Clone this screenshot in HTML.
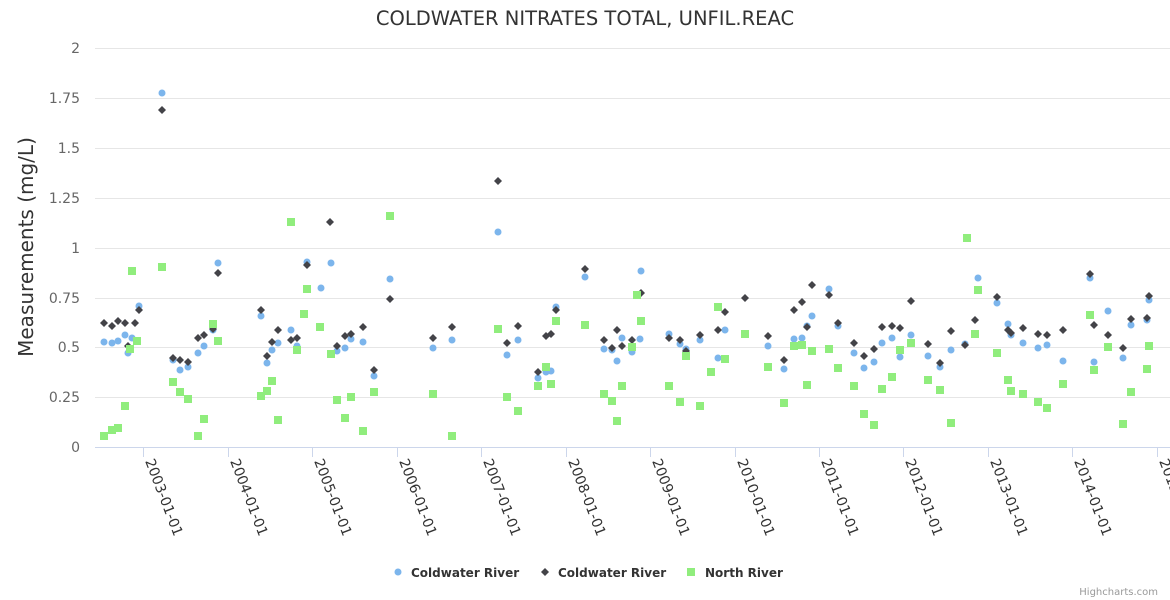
<!DOCTYPE html>
<html><head><meta charset="utf-8"><style>
html,body{margin:0;padding:0;background:#fff;}
svg{display:block;font-family:"DejaVu Sans","Liberation Sans",sans-serif;}
</style></head><body>
<svg width="1170" height="600" viewBox="0 0 1170 600">
<text x="585" y="25" text-anchor="middle" font-size="19.5" fill="#333">COLDWATER NITRATES TOTAL, UNFIL.REAC</text>
<g stroke="#e6e6e6" stroke-width="1">
<line x1="95" x2="1170" y1="48.5" y2="48.5"/><line x1="95" x2="1170" y1="98.5" y2="98.5"/>
<line x1="95" x2="1170" y1="148.5" y2="148.5"/><line x1="95" x2="1170" y1="198.5" y2="198.5"/>
<line x1="95" x2="1170" y1="248.5" y2="248.5"/><line x1="95" x2="1170" y1="298.5" y2="298.5"/>
<line x1="95" x2="1170" y1="347.5" y2="347.5"/><line x1="95" x2="1170" y1="397.5" y2="397.5"/>
</g>
<line x1="95" x2="1170" y1="447.5" y2="447.5" stroke="#ccd6eb"/>
<g stroke="#ccd6eb"><path d="M143.5 447v10M228.5 447v10M312.5 447v10M397.5 447v10M481.5 447v10M566.5 447v10M650.5 447v10M735.5 447v10M819.5 447v10M903.5 447v10M988.5 447v10M1072.5 447v10M1157.5 447v10"/></g>
<g font-size="14" fill="#666" text-anchor="end">
<text x="80" y="53">2</text><text x="80" y="103">1.75</text><text x="80" y="153">1.5</text><text x="80" y="203">1.25</text><text x="80" y="253">1</text><text x="80" y="303">0.75</text><text x="80" y="352">0.5</text><text x="80" y="402">0.25</text><text x="80" y="452">0</text>
</g>
<text transform="translate(33,247) rotate(-90)" text-anchor="middle" font-size="20" fill="#333">Measurements (mg/L)</text>
<g font-size="14" fill="#333" id="xl"></g>
<g id="pts"></g>
<g font-size="12" font-weight="bold" fill="#333">
<circle cx="398" cy="572" r="3.5" fill="#7cb5ec"/><text x="411" y="577">Coldwater River</text>
<path d="M545 568l4 4-4 4-4-4z" fill="#434348"/><text x="558" y="577">Coldwater River</text>
<rect x="687" y="568" width="8" height="8" fill="#90ed7d"/><text x="705" y="577">North River</text>
</g>
<text x="1158" y="595" text-anchor="end" font-size="10" fill="#999">Highcharts.com</text>
</svg>
<script>
var ns="http://www.w3.org/2000/svg";
var xl=document.getElementById("xl"),P=document.getElementById("pts");
var tx=[143,228,312,397,481,566,650,735,819,903,988,1072,1157];
tx.forEach(function(x,i){var t=document.createElementNS(ns,"text");var X=x+2,Y=461;t.setAttribute("x",X);t.setAttribute("y",Y);t.setAttribute("transform","rotate(69 "+X+" "+Y+")");t.textContent=(2003+i)+"-01-01";xl.appendChild(t);});
function parse(s){return s.trim().split(";").map(function(p){return p.split(",").map(Number);});}
var blue="104,342;112,343;118,341;125,335;128,353;132,338;139,306;162,93;173,360;180,370;188,367;198,353;204,346;213,330;218,263;261,316;267,363;272,350;278,343;291,330;297,346;307,262;321,288;331,263;337,351;345,348;351,339;363,342;374,376;390,279;433,348;452,340;498,232;507,355;518,340;538,378;546,372;551,371;556,307;585,277;604,349;612,350;617,361;622,338;632,352;640,339;641,271;669,334;680,344;686,349;700,340;718,358;725,330;745,334;768,346;784,369;794,339;802,338;807,326;812,316;829,289;838,326;854,353;864,368;874,362;882,343;892,338;900,357;911,335;928,356;940,367;951,350;965,344;978,278;997,303;1008,324;1011,335;1023,343;1038,348;1047,345;1063,361;1090,278;1094,362;1108,311;1123,358;1131,325;1147,320;1149,300";
var blk="104,323;112,326;118,321;125,323;128,346;130,349;135,323;139,310;162,110;173,358;180,360;188,362;198,338;204,335;213,329;218,273;261,310;267,356;272,342;278,330;291,340;297,338;307,265;330,222;337,346;345,336;351,334;363,327;374,370;390,299;433,338;452,327;498,181;507,343;518,326;538,372;546,336;551,334;556,310;585,269;604,340;612,348;617,330;622,346;632,340;641,293;669,338;680,340;686,351;700,335;718,330;725,312;745,298;768,336;784,360;794,310;802,302;807,327;812,285;829,295;838,323;854,343;864,356;874,349;882,327;892,326;900,328;911,301;928,344;940,363;951,331;965,345;975,320;997,297;1008,330;1011,333;1023,328;1038,334;1047,335;1063,330;1090,274;1094,325;1108,335;1123,348;1131,319;1147,318;1149,296";
var grn="104,436;112,430;118,428;125,406;130,349;132,271;137,341;162,267;173,382;180,392;188,399;198,436;204,419;213,324;218,341;261,396;267,391;272,381;278,420;291,222;297,350;304,314;307,289;320,327;331,354;337,400;345,418;351,397;363,431;374,392;390,216;433,394;452,436;498,329;507,397;518,411;538,386;546,367;551,384;556,321;585,325;604,394;612,401;617,421;622,386;632,347;637,295;641,321;669,386;680,402;686,356;700,406;711,372;718,307;725,359;745,334;768,367;784,403;794,346;802,345;807,385;812,351;829,349;838,368;854,386;864,414;874,425;882,389;892,377;900,350;911,343;928,380;940,390;951,423;967,238;978,290;975,334;997,353;1008,380;1011,391;1023,394;1038,402;1047,408;1063,384;1090,315;1094,370;1108,347;1123,424;1131,392;1147,369;1149,346";
parse(blue).forEach(function(p){var c=document.createElementNS(ns,"circle");c.setAttribute("cx",p[0]);c.setAttribute("cy",p[1]);c.setAttribute("r",3.5);c.setAttribute("fill","#7cb5ec");P.appendChild(c);});
parse(blk).forEach(function(p){var c=document.createElementNS(ns,"path");c.setAttribute("d","M"+p[0]+" "+(p[1]-4)+"l4 4-4 4-4-4z");c.setAttribute("fill","#434348");P.appendChild(c);});
parse(grn).forEach(function(p){var c=document.createElementNS(ns,"rect");c.setAttribute("x",p[0]-4);c.setAttribute("y",p[1]-4);c.setAttribute("width",8);c.setAttribute("height",8);c.setAttribute("fill","#90ed7d");P.appendChild(c);});
</script>
</body></html>
